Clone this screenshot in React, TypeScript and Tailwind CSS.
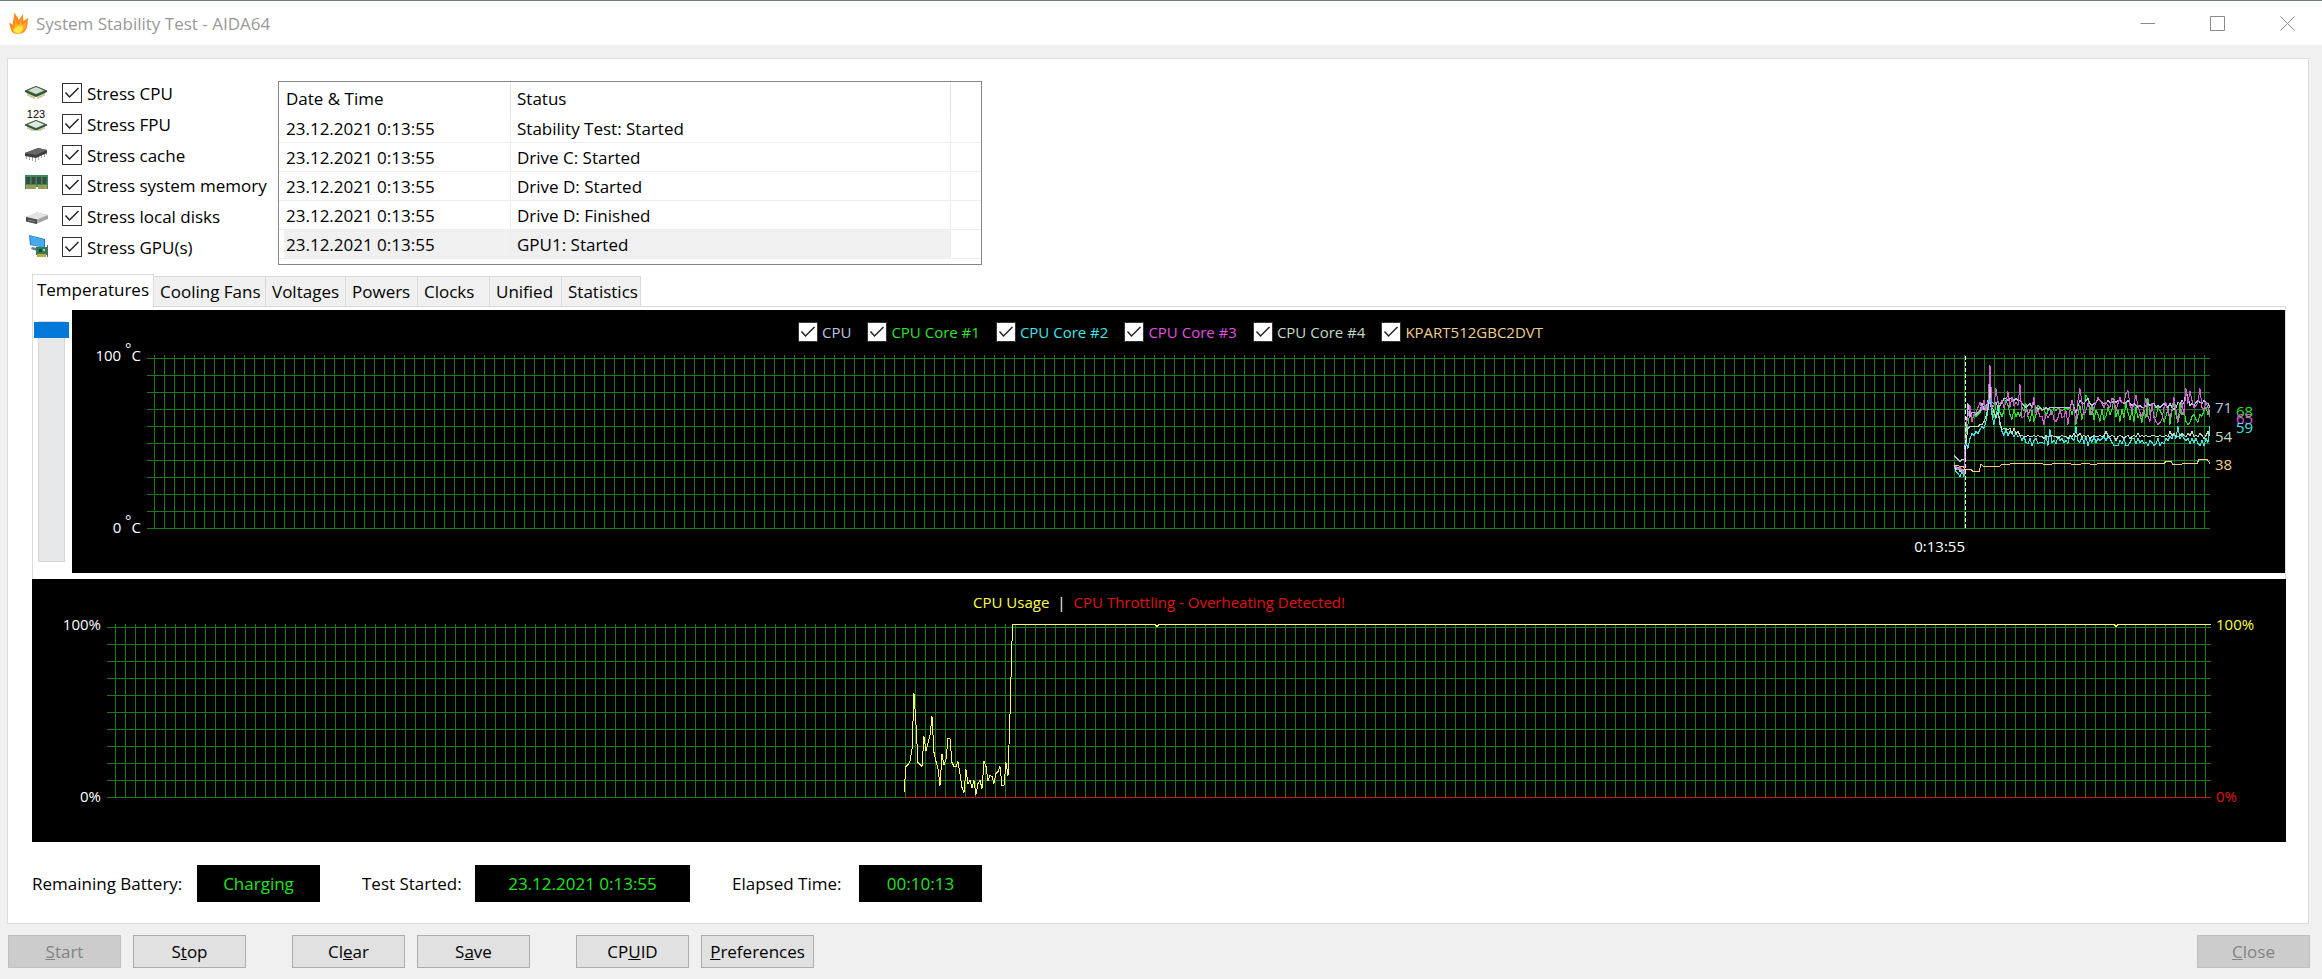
import { useId, useState, type ReactNode } from "react";
import clsx from "clsx";

const STRESS_TESTS = [
  { id: "cpu", label: "Stress CPU", icon: <CpuIcon /> },
  { id: "fpu", label: "Stress FPU", icon: <FpuIcon /> },
  { id: "cache", label: "Stress cache", icon: <CacheIcon /> },
  { id: "memory", label: "Stress system memory", icon: <MemoryIcon /> },
  { id: "disks", label: "Stress local disks", icon: <DiskIcon /> },
  { id: "gpu", label: "Stress GPU(s)", icon: <GpuIcon /> },
];

const LOG = [
  { time: "23.12.2021 0:13:55", status: "Stability Test: Started" },
  { time: "23.12.2021 0:13:55", status: "Drive C: Started" },
  { time: "23.12.2021 0:13:55", status: "Drive D: Started" },
  { time: "23.12.2021 0:13:55", status: "Drive D: Finished" },
  { time: "23.12.2021 0:13:55", status: "GPU1: Started" },
];

const TABS = [
  { name: "Temperatures", width: "w-[122px]" },
  { name: "Cooling Fans", width: "w-28" },
  { name: "Voltages", width: "w-20" },
  { name: "Powers", width: "w-[72px]" },
  { name: "Clocks", width: "w-[72px]" },
  { name: "Unified", width: "w-[72px]" },
  { name: "Statistics", width: "w-[79px]" },
];

const SENSORS = [
  { name: "CPU", text: "text-[#b9c4e6]" },
  { name: "CPU Core #1", text: "text-[#2fe02f]" },
  { name: "CPU Core #2", text: "text-[#3fe6e6]" },
  { name: "CPU Core #3", text: "text-[#e04fe0]" },
  { name: "CPU Core #4", text: "text-[#c3dac3]" },
  { name: "KPART512GBC2DVT", text: "text-[#f0cf8e]" },
];

// One sample every 2px, the last one sits on the right edge of the plot
const CPU = [
  42, 41, 40, 39, 40, 40, 56, 72, 65, 67,
  67, 66, 67, 68, 72, 69, 70, 74, 86, 73,
  72, 73, 70, 71, 73, 75, 75, 74, 75, 75,
  74, 75, 74, 74, 72, 71, 70, 71, 72, 70,
  73, 70, 69, 70, 69, 69, 70, 69, 70, 70,
  70, 70, 70, 70, 70, 70, 70, 70, 70, 74,
  70, 67, 71, 74, 73, 72, 74, 75, 72, 71,
  72, 73, 75, 74, 73, 72, 72, 74, 73, 73,
  74, 73, 74, 74, 73, 72, 73, 74, 72, 71,
  72, 71, 70, 71, 70, 70, 71, 72, 71, 72,
  72, 70, 71, 70, 71, 72, 71, 70, 72, 70,
  69, 70, 73, 72, 74, 72, 79, 76, 71, 72,
  71, 73, 74, 73, 72, 74, 73, 72, 70,
];

const CORE1 = [
  38, 35, 34, 35, 33, 34, 55, 60, 67, 63,
  66, 65, 66, 67, 69, 70, 71, 70, 79, 68,
  64, 72, 74, 67, 65, 68, 74, 71, 66, 63,
  69, 65, 67, 65, 70, 68, 72, 65, 62, 68,
  62, 66, 71, 70, 68, 70, 65, 68, 69, 66,
  70, 68, 70, 69, 68, 69, 70, 69, 70, 66,
  70, 60, 66, 71, 63, 69, 77, 75, 66, 71,
  63, 68, 66, 62, 69, 63, 65, 70, 66, 69,
  75, 65, 68, 62, 69, 64, 72, 67, 63, 68,
  62, 70, 64, 66, 61, 68, 64, 75, 66, 71,
  65, 64, 70, 68, 66, 62, 65, 70, 60, 68,
  73, 66, 61, 72, 66, 69, 62, 60, 61, 65,
  66, 63, 61, 66, 65, 68, 70, 66, 68,
];

const CORE2 = [
  36, 33, 32, 30, 33, 30, 50, 46, 52, 55,
  54, 56, 55, 57, 59, 58, 62, 68, 75, 66,
  60, 66, 70, 60, 56, 54, 57, 54, 56, 55,
  53, 55, 53, 54, 51, 53, 50, 49, 52, 48,
  51, 52, 49, 50, 50, 49, 53, 48, 57, 50,
  51, 49, 53, 51, 52, 50, 51, 49, 54, 52,
  51, 59, 51, 50, 53, 49, 53, 48, 52, 50,
  53, 50, 52, 51, 52, 53, 51, 53, 52, 50,
  48, 48, 48, 51, 49, 52, 48, 48, 50, 52,
  52, 49, 52, 50, 51, 49, 50, 48, 51, 50,
  48, 49, 52, 48, 50, 49, 52, 51, 53, 52,
  55, 52, 59, 52, 54, 52, 51, 52, 49, 52,
  50, 52, 49, 48, 51, 48, 52, 50, 59,
];

const CORE3 = [
  37, 36, 34, 35, 34, 32, 60, 65, 71, 62,
  66, 67, 70, 73, 69, 74, 68, 73, 94, 70,
  71, 81, 73, 72, 74, 70, 73, 79, 70, 76,
  71, 73, 71, 83, 64, 65, 69, 66, 68, 70,
  76, 67, 68, 65, 65, 60, 66, 64, 66, 68,
  63, 62, 64, 69, 64, 65, 68, 60, 68, 74,
  69, 62, 74, 81, 72, 66, 68, 72, 70, 66,
  70, 73, 76, 74, 72, 70, 73, 71, 70, 75,
  74, 68, 72, 76, 73, 73, 78, 80, 71, 69,
  72, 77, 71, 67, 65, 70, 75, 65, 62, 72,
  64, 62, 60, 61, 63, 70, 73, 67, 65, 69,
  76, 68, 62, 66, 73, 66, 81, 72, 79, 74,
  70, 71, 73, 81, 70, 69, 73, 70, 65,
];

const CORE4 = [
  37, 34, 35, 33, 34, 33, 50, 58, 59, 59,
  59, 59, 59, 60, 60, 62, 65, 70, 80, 71,
  67, 64, 67, 61, 57, 58, 58, 57, 58, 55,
  58, 55, 56, 54, 54, 53, 53, 54, 53, 53,
  54, 53, 54, 53, 53, 52, 54, 53, 53, 54,
  53, 53, 52, 53, 54, 53, 53, 52, 54, 53,
  55, 53, 54, 55, 53, 54, 53, 54, 52, 53,
  54, 53, 53, 54, 53, 54, 56, 54, 53, 54,
  53, 51, 53, 54, 53, 52, 53, 54, 52, 53,
  54, 53, 55, 53, 54, 53, 54, 53, 53, 54,
  54, 53, 53, 54, 53, 53, 54, 53, 56, 54,
  55, 53, 53, 54, 55, 54, 53, 55, 54, 56,
  53, 54, 53, 55, 54, 52, 54, 56, 54,
];

const USAGE = [
  3, 18, 19, 21, 28, 60, 42, 20, 19, 18,
  35, 27, 31, 36, 47, 26, 21, 17, 7, 25,
  19, 22, 34, 34, 20, 18, 18, 21, 14, 6,
  3, 16, 8, 10, 6, 10, 2, 8, 10, 5,
  21, 18, 10, 13, 12, 8, 14, 15, 18, 7,
  7, 20, 13, 48, 90,
];

const DRIVE =
  "-256,110 -247,111 -245,114 -239,114 -237,116 -231,116 -229,109 -226,111 -211,111 -208,109 -201,109 -199,108 -168,108 -166,109 -159,109 -157,108 -140,108 -138,109 -130,109 -128,108 -121,108 -119,109 -114,109 -112,108 -46,108 -44,106 -39,106 -37,109 -29,109 -27,108 -13,108 -11,104 -3,104 0,108";

function toPoints(samples: number[], start: number) {
  return samples.map((v, i) => `${start + i * 2},${Math.round(173 - v * 1.73)}`).join(" ");
}

function CpuIcon() {
  return (
    <svg viewBox="0 0 24 24" className="size-6">
      <path d="M4 12v3M6 13v3M8 14v3M10 15v3M14 15v3M16 14v3M18 13v3M20 12v3" stroke="#a9924a" />
      <path d="M1 9.500 12 5l11 4.500v1.500l-11 5-11-5z" fill="#2f4f33" />
      <path d="M1 9.500 12 5l11 4.500L12 14z" fill="#3f7046" />
      <path d="M4 9.500 12 6l8 3.500-8 3.500z" fill="#d3ddd8" />
    </svg>
  );
}

function FpuIcon() {
  return (
    <svg viewBox="0 0 24 24" className="size-6 overflow-visible">
      <text x="12" y="6" textAnchor="middle" fontSize="11" fontFamily="Liberation Sans" fill="#000">
        123
      </text>
      <path d="M4 14v3M6 15v3M8 16v3M10 16v3M14 16v3M16 16v3M18 15v3M20 14v3" stroke="#a9924a" />
      <path d="M1 12.500 12 8l11 4.500v1l-11 5-11-5z" fill="#2f4f33" />
      <path d="M1 12.500 12 8l11 4.500L12 17z" fill="#3f7046" />
      <path d="M4 12.500 12 9l8 3.500-8 3.500z" fill="#e2e9e5" />
    </svg>
  );
}

function CacheIcon() {
  return (
    <svg viewBox="0 0 24 24" className="size-6">
      <path d="M2.500 12v4M5.500 13v4M8.500 14v4M11.500 15v4M14.500 13v4M17.500 11v4M20.500 10v4M22.500 8v4" stroke="#a5a5a8" />
      <path d="m1 10 13-5 9 2v3l-11 5-11-2z" fill="#3e3e40" />
      <path d="m1 10 13-5 9 2-11 5z" fill="#67676a" />
    </svg>
  );
}

function MemoryIcon() {
  return (
    <svg viewBox="0 0 24 24" className="size-6">
      <path d="M1 2h23v14H1z" fill="#3c8a5a" />
      <path d="M2 12h10v4H2zM14 12h9v4h-9z" fill="#a99e55" />
      <path d="M4 12v4M6 12v4M8 12v4M10 12v4M16 12v4M18 12v4M20 12v4" stroke="#7f8a4a" strokeWidth=".6" />
      <path d="M2 4h4v7H2zM7.500 4h4v7h-4zM13 4h4v7h-4zM18.500 4h4v7h-4z" fill="#3a4a42" />
      <path d="M12 14h2v2h-2z" fill="#fff" />
    </svg>
  );
}

function DiskIcon() {
  return (
    <svg viewBox="0 0 24 24" className="size-6">
      <path d="m2 13 11-4.500 11 2.500v4l-12 5-10-3z" fill="#a5a5a5" />
      <path d="m2 13 11-4.500 11 2.500-11 4.500z" fill="#e4e4e2" />
      <path d="m2 13 11 2.500V20L2 17.500z" fill="#4b4b4b" />
      <path d="m4 15.500 7 1.500v1l-7-1.500z" fill="#8f8f8f" />
    </svg>
  );
}

function GpuIcon() {
  return (
    <svg viewBox="0 0 24 24" className="size-6">
      <path d="m5 0 16 4v9L6 10z" fill="#1c78b8" />
      <path d="m6 .5 14 4v8L7 9.500z" fill="#45aaf0" />
      <path d="m8 12 5 1v3l-6-2z" fill="#5f7f96" />
      <path d="M12 12h11v8H12z" fill="#2e7d56" />
      <path d="M15 14h3v3h-3z" fill="#16492e" />
      <path d="M19 14h2v2h-2z" fill="#9fd3b4" />
      <path d="M13 19h9v3h-9z" fill="#c2a845" />
      <path d="M23.500 10v12" stroke="#5c6b62" />
    </svg>
  );
}

function FlameIcon() {
  return (
    <svg viewBox="0 0 20 24" className="h-6 w-5">
      <path
        d="M5 1c1 3 4 4 4.500 8C11 8 12 6 14 3c0 3 0 5 .5 7C16 9 17 8 19.500 7 18 10 19.500 12 18 16c-1 4-4 7-9 7-5 0-7-3-7.500-6C1 15 1 14 0 12c2 0 3 1 4 2-1-4 2-8 1-13z"
        fill="#ff8a1c"
      />
      <path
        d="M6 8c2 2 1 5 3 6 2-1 2-4 3.500-7 0 3 0 6 1 7 .5 0 2.500-2 3.500-3 0 2 .5 4-1 6.500C14 21 12 22.500 9 22.500c-4 0-6-3-6-6 1 0 1 1 2 1 0-4 2-5 1-9.500z"
        fill="#ffad2e"
      />
      <path d="M9 14c1 2 3 2 4 0 2 3 0 8.500-4 8.500-3 0-5-2.500-4-5 1 0 3-.5 4-3.500z" fill="#ffe640" />
    </svg>
  );
}

function CheckBox({ id }: { id: string }) {
  const [checked, setChecked] = useState(true);
  return (
    <span className="grid size-5 shrink-0">
      <input
        id={id}
        type="checkbox"
        checked={checked}
        onChange={(e) => setChecked(e.target.checked)}
        className="col-start-1 row-start-1 size-5 appearance-none border border-[#333333] bg-white"
      />
      {checked && (
        <svg viewBox="0 0 20 20" className="pointer-events-none col-start-1 row-start-1 size-5">
          <path d="m3.500 9.500 4 4.500 9-9" fill="none" stroke="#222" strokeWidth="1.500" />
        </svg>
      )}
    </span>
  );
}

function Plot({ children }: { children: ReactNode }) {
  const id = useId();
  return (
    <svg className="h-[174px] min-w-0 flex-1" shapeRendering="crispEdges">
      <defs>
        <pattern id={id} x="-6" y="0" width="10" height="174" patternUnits="userSpaceOnUse">
          <path d="M.5 0v174" stroke="#1c781c" />
        </pattern>
      </defs>
      {Array.from({ length: 11 }, (_, i) => (
        <line key={i} x1="0" x2="100%" y1={3.5 + i * 17} y2={3.5 + i * 17} stroke="#1c781c" />
      ))}
      <svg x="100%" className="overflow-visible">
        <rect x="-4000" y="0" width="4000" height="174" fill={`url(#${id})`} />
        <g fill="none" transform="translate(0 .5)">
          {children}
        </g>
      </svg>
    </svg>
  );
}

function Degrees({ value }: { value: number }) {
  return (
    <span>
      {value} <sup className="text-[15px]">°</sup>C
    </span>
  );
}

function TemperatureChart() {
  return (
    <div className="min-w-0 flex-1 bg-black pt-3 pb-[17px] text-[15px] leading-5 text-white">
      <div className="flex justify-center">
        {SENSORS.map((sensor) => (
          <label key={sensor.name} className={clsx("mr-4 flex gap-1", sensor.text)}>
            <CheckBox id={`sensor-${sensor.name}`} />
            {sensor.name}
          </label>
        ))}
      </div>
      <div className="mt-[13px] flex">
        <div className="-mt-2.5 -mb-2 flex w-[75px] flex-col items-end justify-between pr-1.5">
          <Degrees value={100} />
          <Degrees value={0} />
        </div>
        <Plot>
          <polyline points={toPoints(CORE1, -256)} stroke="#2fe02f" />
          <polyline points={toPoints(CORE2, -256)} stroke="#3fe6e6" />
          <polyline points={toPoints(CORE4, -256)} stroke="#c3dac3" />
          <polyline points={toPoints(CPU, -256)} stroke="#b9c4e6" />
          <polyline points={toPoints(CORE3, -256)} stroke="#d45fd4" />
          <polyline points={DRIVE} stroke="#f0cf8e" />
          <path d="M-244.500 0v174" stroke="#fff" strokeDasharray="4 2" />
        </Plot>
        <svg className="h-[174px] w-[75px]" fontSize="15">
          <text x="5" y="58" fill="#b9c4e6">71</text>
          <text x="5" y="87" fill="#c3dac3">54</text>
          <text x="5" y="115" fill="#f0cf8e">38</text>
          <text x="26" y="62" fill="#2fe02f">68</text>
          <text x="26" y="69" fill="#e04fe0">65</text>
          <text x="26" y="78" fill="#3fe6e6">59</text>
        </svg>
      </div>
      <div className="mt-[7px] pr-80 text-right">0:13:55</div>
    </div>
  );
}

function UsageChart() {
  return (
    <div className="bg-black pt-[13px] pb-11 text-[15px] leading-5 text-white">
      <div className="flex justify-center gap-2">
        <span className="text-[#ffff4a]">CPU Usage</span>
        <span>|</span>
        <span className="text-[#e01010]">CPU Throttling - Overheating Detected!</span>
      </div>
      <div className="mt-3 flex">
        <div className="-mt-2.5 -mb-2 flex w-[75px] flex-col items-end justify-between pr-1.5">
          <span>100%</span>
          <span>0%</span>
        </div>
        <Plot>
          <path d="M-1306 173H0" stroke="#c01818" />
          <polyline
            points={`${toPoints(USAGE, -1307)} -1198,0 -1056,0 -1054,2 -1052,0 -97,0 -95,2 -93,0 0,0`}
            stroke="#ffff5c"
          />
        </Plot>
        <div className="-mt-2.5 -mb-2 flex w-[75px] flex-col justify-between pl-[5px]">
          <span className="text-[#ffff4a]">100%</span>
          <span className="text-[#e01010]">0%</span>
        </div>
      </div>
    </div>
  );
}

function Readout({ label, value, labelWidth, width }: { label: string; value: string; labelWidth: string; width: string }) {
  return (
    <div className="flex items-center">
      <span className={clsx("whitespace-nowrap", labelWidth)}>{label}</span>
      <output className={clsx("flex h-[37px] items-center justify-center bg-black text-[#1ee61e]", width)}>
        {value}
      </output>
    </div>
  );
}

function PushButton({ children, disabled }: { children: ReactNode; disabled?: boolean }) {
  return (
    <button
      disabled={disabled}
      className="h-[33px] w-[113px] border border-[#adadad] bg-[#e1e1e1] text-black disabled:border-[#bfbfbf] disabled:bg-[#cccccc] disabled:text-[#838383]"
    >
      {children}
    </button>
  );
}

export default function App() {
  const [tab, setTab] = useState("Temperatures");
  const [scroll, setScroll] = useState(0);

  return (
    <div className="flex min-h-screen flex-col bg-[#f0f0f0] font-['Open_Sans',sans-serif] text-[17px] leading-6 text-black">
      <header className="flex h-[45px] items-center border-t border-[#6b8082] bg-white pl-[9px]">
        <FlameIcon />
        <h1 className="flex-1 pt-0.5 pl-[7px] text-[#999999]">System Stability Test - AIDA64</h1>
        {["M.5 7.500h15", "M.5.5h14v14H.5z", "m.5.5 14 14m0-14-14 14"].map((d, i) => (
          <button
            key={d}
            aria-label={["Minimize", "Maximize", "Close"][i]}
            className="flex h-full w-[70px] items-center justify-center"
          >
            <svg viewBox="0 0 15 15" className="size-[15px]">
              <path d={d} fill="none" stroke="#8a8a8a" />
            </svg>
          </button>
        ))}
      </header>

      <main className="mt-[13px] mr-[13px] ml-[7px] border border-[#dcdcdc] bg-white pt-[22px] pr-[22px] pb-[21px] pl-6">
        <div className="flex">
          <ul className="-ml-2 flex h-[178px] w-[254px] flex-col justify-between">
            {STRESS_TESTS.map((test) => (
              <li key={test.id} className="flex h-6 items-center">
                {test.icon}
                <label className="ml-3.5 flex items-center gap-[5px] whitespace-nowrap">
                  <CheckBox id={`stress-${test.id}`} />
                  <span className="pt-0.5">{test.label}</span>
                </label>
              </li>
            ))}
          </ul>

          <div className="h-[184px] w-[704px] border border-[#828790]">
            <table className="w-full table-fixed border-separate border-spacing-0 text-left">
              <thead>
                <tr className="h-8">
                  <th className="w-[232px] border-r border-[#e5e5e5] p-0 pt-0.5 pl-[7px] font-normal">Date &amp; Time</th>
                  <th className="w-[440px] border-r border-[#e5e5e5] p-0 pt-0.5 pl-1.5 font-normal">Status</th>
                  <th className="p-0" />
                </tr>
              </thead>
              <tbody>
                {LOG.map((row, i) => {
                  const cell = clsx("h-7 pt-0.5 leading-[26px]", i === LOG.length - 1 && "bg-[#f0f0f0]");
                  return (
                    <tr key={row.status} className="h-[29px]">
                      <td className="border-r border-b border-[#ededed] p-0 pl-[5px]">
                        <div className={clsx(cell, "pl-0.5")}>{row.time}</div>
                      </td>
                      <td className="border-r border-b border-[#ededed] p-0">
                        <div className={clsx(cell, "pl-1.5")}>{row.status}</div>
                      </td>
                      <td className="border-b border-[#ededed] p-0" />
                    </tr>
                  );
                })}
              </tbody>
            </table>
          </div>
        </div>

        <div role="tablist" className="mt-[9px] flex h-8 items-end">
          {TABS.map(({ name, width }) => (
            <button
              key={name}
              role="tab"
              aria-selected={tab === name}
              onClick={() => setTab(name)}
              className={clsx(
                "border-t border-r border-[#d9d9d9] whitespace-nowrap",
                width,
                tab === name ? "z-10 -mb-px h-[33px] border-l bg-white pb-0.5 text-center" : "h-[30px] bg-[#f0f0f0] pl-1.5 text-left"
              )}
            >
              {name}
            </button>
          ))}
        </div>

        <section className="flex border-x border-t border-[#d9d9d9] pt-[3px] pb-1.5 pl-px">
          <input
            type="range"
            aria-label="Scroll sensors"
            value={scroll}
            onChange={(e) => setScroll(Number(e.target.value))}
            className="mt-[11px] mr-[3px] h-[241px] w-[35px] shrink-0 appearance-none bg-transparent [writing-mode:vertical-lr] [&::-webkit-slider-runnable-track]:w-[27px] [&::-webkit-slider-runnable-track]:border [&::-webkit-slider-runnable-track]:border-[#d6d6d6] [&::-webkit-slider-runnable-track]:bg-[#e7e8ea] [&::-webkit-slider-thumb]:-ml-[5px] [&::-webkit-slider-thumb]:h-4 [&::-webkit-slider-thumb]:w-[35px] [&::-webkit-slider-thumb]:appearance-none [&::-webkit-slider-thumb]:bg-[#0078d7]"
          />
          <TemperatureChart />
        </section>

        <UsageChart />

        <div className="mt-[23px] flex gap-[42px]">
          <Readout label="Remaining Battery:" value="Charging" labelWidth="w-[165px]" width="w-[123px]" />
          <Readout label="Test Started:" value="23.12.2021 0:13:55" labelWidth="w-[113px]" width="w-[215px]" />
          <Readout label="Elapsed Time:" value="00:10:13" labelWidth="w-[127px]" width="w-[123px]" />
        </div>
      </main>

      <footer className="mt-[11px] mr-3 mb-[11px] ml-2 flex">
        <div className="flex gap-3">
          <PushButton disabled>
            <u>S</u>tart
          </PushButton>
          <PushButton>
            S<u>t</u>op
          </PushButton>
        </div>
        <div className="ml-[46px] flex gap-3">
          <PushButton>
            Cl<u>e</u>ar
          </PushButton>
          <PushButton>
            S<u>a</u>ve
          </PushButton>
        </div>
        <div className="ml-[46px] flex flex-1 gap-3">
          <PushButton>
            CP<u>U</u>ID
          </PushButton>
          <PushButton>
            <u>P</u>references
          </PushButton>
        </div>
        <PushButton disabled>
          <u>C</u>lose
        </PushButton>
      </footer>
    </div>
  );
}
